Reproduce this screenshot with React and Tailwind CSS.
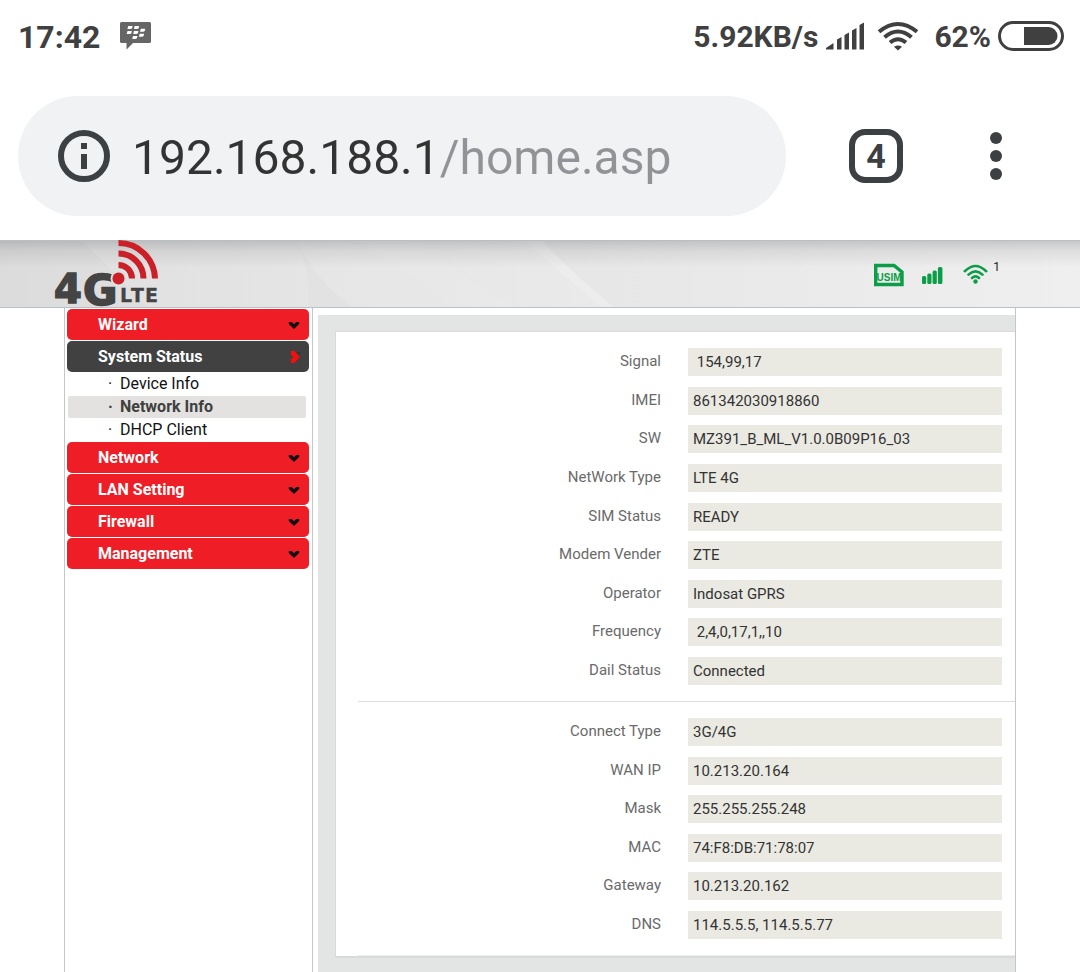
import { useState } from "react";

const deviceRows = [
    ["Signal", " 154,99,17"],
    ["IMEI", "861342030918860"],
    ["SW", "MZ391_B_ML_V1.0.0B09P16_03"],
    ["NetWork Type", "LTE 4G"],
    ["SIM Status", "READY"],
    ["Modem Vender", "ZTE"],
    ["Operator", "Indosat GPRS"],
    ["Frequency", " 2,4,0,17,1,,10"],
    ["Dail Status", "Connected"],
];

const wanRows = [
    ["Connect Type", "3G/4G"],
    ["WAN IP", "10.213.20.164"],
    ["Mask", "255.255.255.248"],
    ["MAC", "74:F8:DB:71:78:07"],
    ["Gateway", "10.213.20.162"],
    ["DNS", "114.5.5.5, 114.5.5.77"],
];

const menu = [
    { label: "Wizard" },
    { label: "System Status", items: ["Device Info", "Network Info", "DHCP Client"] },
    { label: "Network" },
    { label: "LAN Setting" },
    { label: "Firewall" },
    { label: "Management" },
];

const StatusBar = () => (
    <div className="flex h-18 items-center pt-px pr-4 pl-[18px] text-[#404040]">
        <span className="text-[32px] leading-10 font-bold">17:42</span>
        <svg className="-mt-px ml-5" width="32" height="30" viewBox="0 0 32 30">
            <path d="M1.5 1h28q1.5 0 1.5 1.500v18q0 1.500-1.500 1.500H13l-6.500 6.500V22h-5Q0 22 0 20.500v-18Q0 1 1.500 1z" fill="#666" />
            <g fill="#fff">
                <path d="M8.200 5h3.800q.8 0 .6.8-.4 2.200-2 2.200H7.400z" />
                <path d="M14.700 5h3.800q.8 0 .6.8-.4 2.200-2 2.200h-3.200z" />
                <path d="M7.500 10h3.800q.8 0 .6.8-.4 2.200-2 2.200H6.700z" />
                <path d="M14 10h3.800q.8 0 .6.8-.4 2.200-2 2.200h-3.200z" />
                <path d="M20.800 7.800h3.800q.8 0 .6.800-.4 2.200-2 2.200H20z" />
                <path d="M19.700 12.800h3.800q.8 0 .6.800-.4 2.200-2 2.200h-3.200z" />
                <path d="M13 15h3.800q.8 0 .6.8-.4 2.200-2 2.200h-3.200z" />
            </g>
        </svg>
        <span className="ml-auto text-[30px] leading-10 font-bold">5.92KB/s</span>
        <svg className="-mt-0.5 ml-2" width="39" height="28" viewBox="0 0 39 28" fill="currentColor">
            <path d="M0 27.500V26l7.500-5v6.500zM11 27.500v-10l4.500-2.500v12.500zM18.500 27.500V13L23 10.500v17zM26 27.500V8.500L30.500 6v21.500zM33.500 27.500V3L38 .5v27z" />
        </svg>
        <svg className="-mt-0.5 ml-3" width="42" height="30" viewBox="0 0 42 30" fill="none" stroke="currentColor" strokeWidth="4">
            <path d="M2 10.800Q21-4.800 40 10.800M7.500 16.200Q21 4.800 34.500 16.200M13 21.600Q21 14.800 29 21.600" />
            <path d="M21 29.500l-4-3.700q4-2.800 8 0z" fill="currentColor" stroke="none" />
        </svg>
        <span className="ml-[15px] text-[30px] leading-10 font-bold">62%</span>
        <svg className="-mt-0.5 ml-[7px]" width="66" height="30" viewBox="0 0 66 30">
            <rect x="1.500" y="1.500" width="63" height="27" rx="13.500" fill="none" stroke="currentColor" strokeWidth="3" />
            <path d="M26 6h24.500a9 9 0 0 1 0 18H26z" fill="currentColor" />
        </svg>
    </div>
);

const AddressBar = () => {
    const [url, setUrl] = useState("192.168.188.1/home.asp");

    return (
        <div className="flex items-center py-6 pr-[78px] pl-[18px] text-[#3c4043]">
            <label className="flex h-30 flex-1 items-center rounded-full bg-[#f1f2f4] pl-10">
                <svg width="52" height="52" viewBox="0 0 52 52">
                    <circle cx="26" cy="26" r="23" fill="none" stroke="currentColor" strokeWidth="6" />
                    <path d="M23 13h6v6h-6zM23 24h6v15h-6z" fill="currentColor" />
                </svg>
                <input
                    type="text"
                    aria-label="Address"
                    value={url}
                    onChange={(e) => setUrl(e.target.value)}
                    className="ml-[22px] w-0 flex-1 bg-[linear-gradient(90deg,#333_305px,#929396_305px)] bg-clip-text pt-1 text-[48px] leading-16 text-transparent outline-none"
                />
            </label>
            <button
                aria-label="Tabs"
                className="ml-[63px] flex size-[54px] items-center justify-center rounded-2xl border-6 border-current text-[34px] leading-10 font-bold"
            >
                4
            </button>
            <button aria-label="More" className="ml-[87px]">
                <svg width="12" height="48" viewBox="0 0 12 48" fill="currentColor">
                    <circle cx="6" cy="6" r="6" />
                    <circle cx="6" cy="24" r="6" />
                    <circle cx="6" cy="42" r="6" />
                </svg>
            </button>
        </div>
    );
};

const Logo = () => (
    <svg className="overflow-visible" width="106" height="66" viewBox="0 0 106 66" role="img" aria-label="4G LTE">
        <g fontFamily="DejaVu Sans, sans-serif" fontWeight="700" fill="#444445" stroke="#444445">
            <text x="0" y="62" fontSize="40" strokeWidth="1.600">4</text>
            <text x="29" y="64" fontSize="42" strokeWidth="1.600">G</text>
            <text x="66" y="61" fontSize="19" strokeWidth=".3">L</text>
            <text x="77" y="61" fontSize="19" strokeWidth=".3">T</text>
            <text x="91" y="61" fontSize="19" strokeWidth=".3">E</text>
        </g>
        <circle cx="64.500" cy="37.500" r="8" fill="#dfdfdf" />
        <circle cx="64.500" cy="37.500" r="6" fill="#cb2027" />
        <path
            d="M64.500 24a13.500 13.500 0 0 1 13.500 13.500M64.500 12.500a25 25 0 0 1 25 25M64.500 2a36.500 36.500 0 0 1 36.500 35.500"
            fill="none"
            stroke="#cb2027"
            strokeWidth="6"
        />
    </svg>
);

const Banner = () => (
    <header className="relative flex h-17 items-start justify-between border-t border-b border-t-[#b9bfc2] border-b-[#b5c2c7] bg-linear-to-r from-[#dcdcdc] via-[#e6e6e6] to-[#efefef] pr-20 pl-[54px]">
        <svg className="absolute inset-0 size-full" viewBox="0 0 1080 67" preserveAspectRatio="none">
            <defs>
                <linearGradient id="shade" x1="0" y1="0" x2="0" y2="1">
                    <stop offset="0" stopColor="#000" stopOpacity=".16" />
                    <stop offset=".15" stopColor="#000" stopOpacity=".07" />
                    <stop offset=".4" stopColor="#000" stopOpacity="0" />
                </linearGradient>
            </defs>
            <path d="M82 0l66 67h160Q310 30 297 0z" fill="#fff" opacity=".12" />
            <path d="M297 0q15 35 54 67h250L525 0z" fill="#fff" opacity=".14" />
            <path d="M525 0q40 36 76 67h12Q570 30 542 0z" fill="#fff" opacity=".25" />
            <path d="M360 0q50 30 90 67h60Q450 25 410 0z" fill="#fff" opacity=".08" />
            <path d="M0 0h1080v67H0z" fill="url(#shade)" />
        </svg>
        <div className="relative"><Logo /></div>
        <div className="relative flex items-start pt-[22px] text-[#0b9d47]">
            <svg width="30" height="24" viewBox="0 0 30 24" role="img" aria-label="USIM">
                <path d="M1.700 2.500H20L28 9v12.500H1.700z" fill="none" stroke="currentColor" strokeWidth="3.400" />
                <text x="15" y="18" textAnchor="middle" fontFamily="Liberation Sans, sans-serif" fontSize="10" fontWeight="700" fill="currentColor">USIM</text>
            </svg>
            <svg className="mt-1 ml-[18px]" width="21" height="18" viewBox="0 0 21 18" fill="currentColor">
                <rect x="0" y="9" width="4.200" height="8" rx="1.500" />
                <rect x="5.300" y="6.500" width="4.200" height="10.500" rx="1.500" />
                <rect x="10.600" y="3.500" width="4.200" height="13.500" rx="1.500" />
                <rect x="15.900" y="0" width="4.500" height="17" rx="1.500" />
            </svg>
            <svg className="mt-px ml-5" width="25" height="20" viewBox="0 0 25 20" fill="none" stroke="currentColor" strokeWidth="2.600" strokeLinecap="round">
                <path d="M1.800 7.200Q12.500-3.200 23.200 7.200M5.500 10.600Q12.500 4 19.500 10.600M9 14Q12.500 10.900 16 14" />
                <circle cx="12.500" cy="17.500" r="2.200" fill="currentColor" stroke="none" />
            </svg>
            <span className="-mt-1 ml-[5px] text-xs leading-4 text-[#222]">1</span>
        </div>
    </header>
);

const Chevron = ({ open }) =>
    open ? (
        <svg className="mr-2" width="12" height="12" viewBox="0 0 12 12">
            <path d="M7 1h4v3z" fill="#333" />
            <path d="M2 0h3.500l5 6-5 6H2V8.500L4.500 6 2 3.500z" fill="#fb0b0b" />
        </svg>
    ) : (
        <svg className="mr-[9px]" width="12" height="12" viewBox="0 0 12 12">
            <path d="M.8 3h3L6 5.200 8.200 3h3v2L6 10 .8 5z" fill="#111" />
        </svg>
    );

const SideMenu = ({ current, onSelect }) => (
    <nav className="flex w-[249px] shrink-0 flex-col gap-px border-x border-[#c4c7c8] pt-px pr-[3px] pl-0.5 text-base">
        {menu.map(({ label, items }) => (
            <div key={label}>
                <button
                    className={`flex h-[31px] w-full items-center justify-between rounded-[5px] pl-[31px] text-left font-bold text-white ${items ? "bg-[#414141]" : "bg-[#ef1d25]"}`}
                >
                    {label}
                    <Chevron open={!!items} />
                </button>
                {items && (
                    <ul>
                        {items.map((item) => (
                            <li key={item} className="h-[23px] pt-px pr-[3px] pl-px">
                                <a
                                    href="#"
                                    onClick={() => onSelect(item)}
                                    className={`flex h-[22px] items-center rounded-xs pl-10 ${item === current ? "bg-[#e3e2e0] font-bold text-[#404040]" : "text-[#111]"}`}
                                >
                                    <span className="w-3">·</span>
                                    {item}
                                </a>
                            </li>
                        ))}
                    </ul>
                )}
            </div>
        ))}
    </nav>
);

const InfoList = ({ rows, className }) => (
    <dl className={`flex flex-col justify-between text-[15px] ${className}`}>
        {rows.map(([label, value]) => (
            <div key={label} className="flex h-7 pr-[13px]">
                <dt className="mr-[27px] flex-1 text-right leading-[26px] text-[#6a6a6a]">{label}</dt>
                <dd className="w-[314px] bg-[#eaeae3] pl-[5px] leading-7 whitespace-pre text-[#333]">{value}</dd>
            </div>
        ))}
    </dl>
);

const App = () => {
    const [page, setPage] = useState("Network Info");

    return (
        <div className="flex min-h-screen flex-col bg-white font-[Roboto,sans-serif]">
            <StatusBar />
            <AddressBar />
            <Banner />
            <div className="mx-16 flex flex-1">
                <SideMenu current={page} onSelect={setPage} />
                <main className="ml-[5px] flex-1 border-r border-[#c4c7c8] pt-[7px]">
                    <div className="h-full bg-[#e3e5e4] pt-4 pb-[15px] pl-[17px]">
                        <section className="border-t border-b-2 border-l border-[#dadada] bg-white pt-4 pl-[22px]">
                            <InfoList rows={deviceRows} className="min-h-[337px]" />
                            <hr className="mt-4 mb-4 border-[#dcdcdc]" />
                            <InfoList rows={wanRows} className="min-h-[221px]" />
                            <hr className="mt-4 border-[#ececec]" />
                        </section>
                    </div>
                </main>
            </div>
        </div>
    );
};

export default App;
